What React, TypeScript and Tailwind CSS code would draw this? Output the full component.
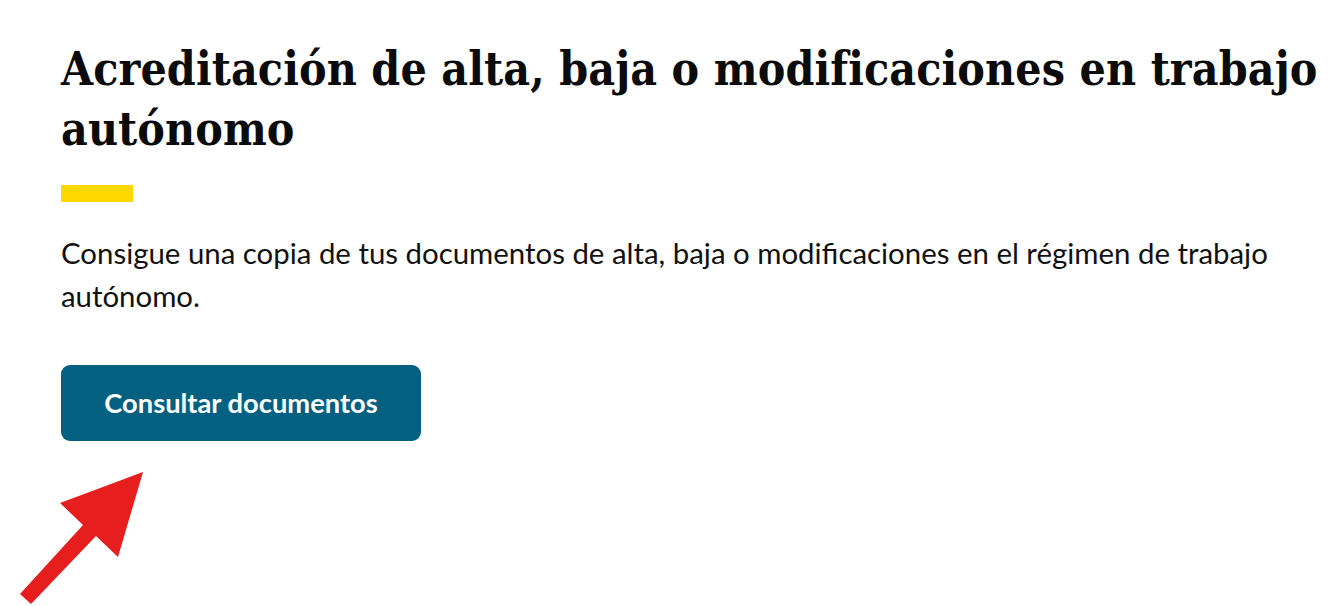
export default function App() {
  return (
    <div className="relative min-h-[606px] w-full overflow-hidden bg-white">
      <main className="pl-[61px] pr-[6px] pt-[39px]">
        <h1 className="font-['DejaVu_Serif',serif] font-stretch-condensed text-[46px] font-bold leading-[60px] tracking-[0.1px] text-[#0b0b0b]">
          Acreditación de alta, baja o modificaciones en trabajo autónomo
        </h1>
        <div className="mt-[26px] h-[17px] w-[72px] bg-[#ffd800]" />
        <p className="mt-[29px] max-w-[1240px] font-['Lato',sans-serif] text-[29.4px] leading-[43px] text-[#111]">
          Consigue una copia de tus documentos de alta, baja o modificaciones en el régimen de trabajo autónomo.
        </p>
        <button className="mt-[48px] flex h-[76px] w-[360px] items-center justify-center rounded-[9px] bg-[#036080] font-['Lato',sans-serif] text-[27.3px] font-bold text-white">
          Consultar documentos
        </button>
      </main>

      {/* annotation arrow */}
      <svg
        className="absolute left-0 top-[450px]"
        width="200"
        height="156"
        viewBox="0 0 200 156"
      >
        <polygon
          points="143,22 118,107 96,86 31,154 20,144 83,75 60,53"
          fill="#e61e1e"
        />
      </svg>
    </div>
  );
}
